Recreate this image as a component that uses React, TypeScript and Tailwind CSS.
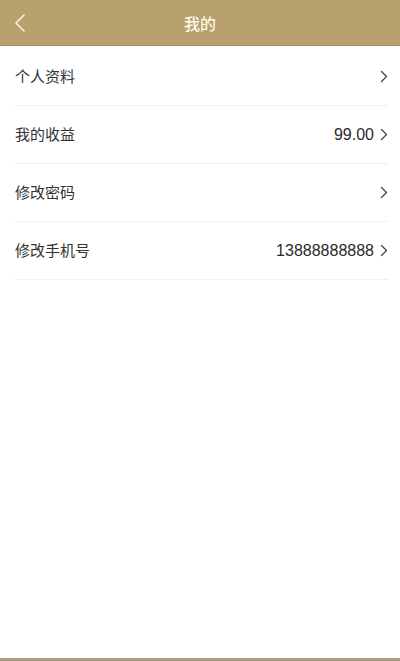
import React from "react";

const rows: { label: string; value?: string }[] = [
  { label: "个人资料" },
  { label: "我的收益", value: "99.00" },
  { label: "修改密码" },
  { label: "修改手机号", value: "13888888888" },
];

function Chevron() {
  return (
    <svg width="8" height="13" viewBox="0 0 8 13" fill="none" className="ml-[6px]">
      <path d="M1.5 1.5 L6.5 6.5 L1.5 11.5" stroke="#444" strokeWidth="1.3" strokeLinecap="round" strokeLinejoin="round" />
    </svg>
  );
}

export default function App() {
  return (
    <div
      className="w-[400px] h-[661px] bg-white flex flex-col"
      style={{ fontFamily: '"Noto Sans CJK SC", "Liberation Sans", sans-serif' }}
    >
      <div className="h-[46px] bg-[#b9a06f] border-b border-[#a8926a] flex items-center relative shrink-0">
        <div className="pl-[14px] flex items-center">
          <svg width="12" height="20" viewBox="0 0 12 20" fill="none">
            <path d="M10 2 L2 10 L10 18" stroke="#fbf3d8" strokeWidth="1.6" strokeLinecap="round" strokeLinejoin="round" />
          </svg>
        </div>
        <div className="absolute inset-0 flex items-center justify-center text-[16px] font-medium text-[#fdf8e6]">
          我的
        </div>
      </div>
      <div className="flex flex-col flex-1 pt-[2px]">
        {rows.map((r) => (
          <div
            key={r.label}
            className="ml-[14px] mr-[12px] h-[58px] border-b border-[#f0f0f0] flex items-center justify-between"
          >
            <span className="text-[15px] text-[#333] pl-px">{r.label}</span>
            <div className="flex items-center">
              {r.value && (
                <span className="text-[16px] text-[#2a2a2a]" style={{ fontFamily: '"Liberation Sans", sans-serif' }}>
                  {r.value}
                </span>
              )}
              <Chevron />
            </div>
          </div>
        ))}
      </div>
      <div className="h-[3px] bg-[#ab9c82] shrink-0" />
    </div>
  );
}
